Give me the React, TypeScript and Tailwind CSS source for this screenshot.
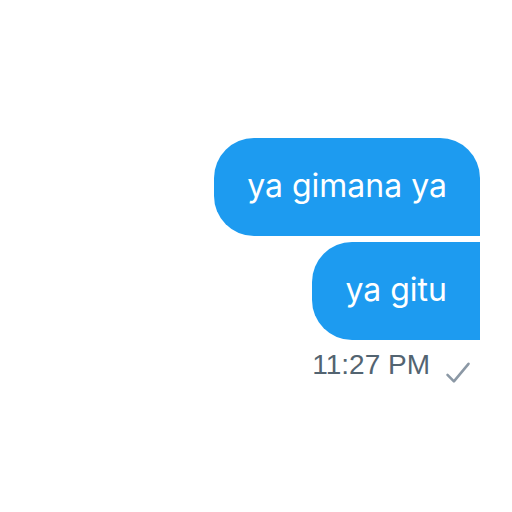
export default function App() {
  return (
    <div className="flex h-[512px] w-[512px] flex-col items-end bg-white pr-[32px] pt-[138px]">
      <div
        className="flex h-[98px] items-center rounded-l-[40px] rounded-tr-[40px] bg-[#1d9bf0] px-[33px] pb-[2px] text-[32px] text-white"
        style={{ fontFamily: "Inter, 'Noto Sans', sans-serif" }}
      >
        ya gimana ya
      </div>
      <div
        className="mt-[6px] flex h-[98px] items-center rounded-l-[40px] bg-[#1d9bf0] px-[33px] pb-[2px] text-[32px] text-white"
        style={{ fontFamily: "Inter, 'Noto Sans', sans-serif" }}
      >
        ya gitu
      </div>
      <div className="mt-[4px] flex items-center gap-[14px] pr-[8px]">
        <span
          className="text-[28px] text-[#536471]"
          style={{ fontFamily: "'Liberation Sans', Arial, sans-serif" }}
        >
          11:27 PM
        </span>
        <svg width="28" height="28" viewBox="0 0 24 24" className="mt-[14px]">
          <path d="M3 14.5 L8.5 20 L21 5" fill="none" stroke="#8b98a5" strokeWidth="2.2" strokeLinecap="round" strokeLinejoin="round" />
        </svg>
      </div>
    </div>
  );
}
